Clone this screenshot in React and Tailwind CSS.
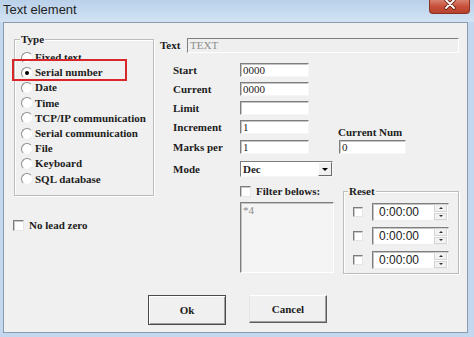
import React from 'react';

/* ── classic win32 bits ───────────────────────────────── */
const Radio = ({ checked }) => (
    <span className="w-[12px] h-[12px] shrink-0 rounded-full bg-white border border-t-[#8c8c8c] border-l-[#8c8c8c] border-r-[#ededed] border-b-[#ededed] flex items-center justify-center">
        {checked && <span className="w-[4px] h-[4px] rounded-full bg-black" />}
    </span>
);

const Check = ({ size = 'w-[11px] h-[11px]' }) => (
    <span className={`${size} shrink-0 bg-white border border-t-[#7c7c7c] border-l-[#7c7c7c] border-r-[#e6e6e6] border-b-[#e6e6e6] shadow-[inset_1px_1px_0_#c8c8c8]`} />
);

const Field = ({ value = '', className = '' }) => (
    <div className={`bg-white border border-t-[#7e7e7e] border-l-[#7e7e7e] border-r-[#f6f6f6] border-b-[#f6f6f6] shadow-[inset_1px_1px_0_#c4c4c4] flex items-center pl-[2px] text-[11px] text-[#222] font-normal ${className}`}>
        {value}
    </div>
);

const types = [
    'Fixed text', 'Serial number', 'Date', 'Time', 'TCP/IP communication',
    'Serial communication', 'File', 'Keyboard', 'SQL database',
];

const rows = [
    { label: 'Start', value: '0000', mt: 'mt-[10px]' },
    { label: 'Current', value: '0000', mt: 'mt-[5px]' },
    { label: 'Limit', value: '', mt: 'mt-[5px]' },
];

const TimeBox = () => (
    <div className="w-[77px] h-[18px] ml-[9px] bg-white border border-t-[#7e7e7e] border-l-[#7e7e7e] border-r-[#ececec] border-b-[#ececec] shadow-[inset_1px_1px_0_#c4c4c4] flex items-center">
        <span className="flex-1 pl-[6px] font-['Liberation_Sans',sans-serif] font-normal text-[12px] text-[#222] leading-none">0:00:00</span>
        <div className="w-[13px] h-[16px] flex flex-col gap-[1px] mr-[1px]">
            <div className="flex-1 bg-[#f2f2f2] border border-[#d4d4d4] flex items-center justify-center">
                <span className="w-0 h-0 border-l-[2px] border-r-[2px] border-b-[2px] border-l-transparent border-r-transparent border-b-[#333]" />
            </div>
            <div className="flex-1 bg-[#f2f2f2] border border-[#d4d4d4] flex items-center justify-center">
                <span className="w-0 h-0 border-l-[2px] border-r-[2px] border-t-[2px] border-l-transparent border-r-transparent border-t-[#333]" />
            </div>
        </div>
    </div>
);

export default function App() {
    return (
        <div className="w-[474px] h-[337px] flex flex-col bg-[#c3d8ee] font-['Liberation_Serif',serif] font-bold text-[11px] text-[#1c1c1c] overflow-hidden">
            {/* Title bar */}
            <div className="h-[22px] shrink-0 flex items-start justify-between bg-gradient-to-b from-[#b9d0e9] via-[#c6daef] to-[#d3e3f3]">
                <span className="pl-[3px] pt-[2px] font-['Liberation_Sans',sans-serif] font-normal text-[13px] text-[#1e1e1e] leading-[16px]">Text element</span>
                <div className="mr-[4px] w-[41px] h-[14px] rounded-b-[4px] border border-t-0 border-[#8a3325] bg-gradient-to-b from-[#d8816e] via-[#c7503a] to-[#b6422d] flex items-start justify-center">
                    <svg width="12" height="10" viewBox="0 0 12 10">
                        <path d="M2 0 L10 8 M10 0 L2 8" stroke="#5a1a10" strokeWidth="3.4" strokeLinecap="round" />
                        <path d="M2 0 L10 8 M10 0 L2 8" stroke="#ffffff" strokeWidth="1.8" strokeLinecap="round" />
                    </svg>
                </div>
            </div>

            {/* Client */}
            <div className="ml-[3px] mr-[6px] mb-[4px] flex-1 flex flex-col bg-[#f0f0f0] border border-[#8a9bb0]">
                <div className="h-[262px] pt-[15px] flex">
                    {/* left column */}
                    <div className="pl-[10px] flex flex-col">
                        <div className="relative mt-[1px] w-[140px] h-[157px] border border-[#bcbcbc] shadow-[inset_1px_1px_0_#ffffff,1px_1px_0_#ffffff] pt-[10px] pl-[6px]">
                            <span className="absolute -top-[7px] left-[5px] px-[1px] bg-[#f0f0f0] leading-[12px]">Type</span>
                            {types.map((t, i) => (
                                <div key={t} className="h-[15.2px] flex items-center gap-[2px]">
                                    <Radio checked={i === 1} />
                                    <span className="leading-none whitespace-nowrap">{t}</span>
                                </div>
                            ))}
                            {/* red annotation box */}
                            <div className="absolute left-[-3px] top-[19px] w-[115px] h-[22px] border-2 border-[#d8262a]" />
                        </div>
                        <div className="mt-[24px] -ml-[1px] flex items-center gap-[5px]">
                            <Check />
                            <span className="leading-none">No lead zero</span>
                        </div>
                    </div>

                    {/* right column */}
                    <div className="ml-[6px] flex flex-col">
                        <div className="h-[15px] flex items-center">
                            <span className="w-[27px]">Text</span>
                            <div className="w-[272px] h-[15px] bg-[#efefef] border border-t-[#7e7e7e] border-l-[#7e7e7e] border-r-[#ffffff] border-b-[#ffffff] flex items-center pl-[2px] font-normal text-[#8c8c8c]">TEXT</div>
                        </div>

                        {rows.map((r) => (
                            <div key={r.label} className={`${r.mt} h-[14px] flex items-center pl-[13px]`}>
                                <span className="w-[67px]">{r.label}</span>
                                <Field value={r.value} className="w-[69px] h-[14px]" />
                            </div>
                        ))}

                        <div className="mt-[5px] h-[14px] flex items-start pl-[13px]">
                            <span className="w-[67px] leading-[14px]">Increment</span>
                            <Field value="1" className="w-[69px] h-[14px]" />
                            <span className="ml-[29px] pt-[5px] leading-[14px] whitespace-nowrap">Current Num</span>
                        </div>

                        <div className="mt-[6px] h-[14px] flex items-center pl-[13px]">
                            <span className="w-[67px]">Marks per</span>
                            <Field value="1" className="w-[69px] h-[14px]" />
                            <Field value="0" className="ml-[30px] w-[67px] h-[14px]" />
                        </div>

                        <div className="mt-[7px] h-[16px] flex items-center pl-[13px]">
                            <span className="w-[67px]">Mode</span>
                            <div className="w-[93px] h-[16px] bg-white border border-t-[#7e7e7e] border-l-[#7e7e7e] border-r-[#f6f6f6] border-b-[#f6f6f6] flex items-center">
                                <span className="flex-1 pl-[2px]">Dec</span>
                                <div className="w-[14px] h-[14px] bg-[#f0f0f0] border border-t-[#ffffff] border-l-[#ffffff] border-r-[#6a6a6a] border-b-[#6a6a6a] flex items-center justify-center">
                                    <span className="w-0 h-0 border-l-[3px] border-r-[3px] border-t-[3px] border-l-transparent border-r-transparent border-t-black" />
                                </div>
                            </div>
                        </div>

                        <div className="mt-[9px] flex items-start">
                            <div className="w-[80px]" />
                            <div className="w-[94px] flex flex-col">
                                <div className="h-[11px] flex items-center gap-[5px]">
                                    <Check />
                                    <span className="leading-none whitespace-nowrap">Filter belows:</span>
                                </div>
                                <div className="mt-[5px] h-[71px] bg-[#f4f4f4] border border-t-[#7e7e7e] border-l-[#7e7e7e] border-r-[#ffffff] border-b-[#ffffff] shadow-[inset_1px_1px_0_#c4c4c4] pl-[2px] pt-[1px] font-normal text-[#8a8a8a] leading-[13px]">
                                    *4
                                </div>
                            </div>
                            <div className="relative ml-[9px] mt-[5px] w-[116px] h-[83px] border border-[#bcbcbc] shadow-[inset_1px_1px_0_#ffffff,1px_1px_0_#ffffff] pt-[11px] pl-[9px] flex flex-col gap-[6px]">
                                <span className="absolute -top-[7px] left-[4px] px-[1px] bg-[#f0f0f0] leading-[12px]">Reset</span>
                                {[0, 1, 2].map((i) => (
                                    <div key={i} className="h-[18px] flex items-center">
                                        <Check size="w-[10px] h-[10px]" />
                                        <TimeBox />
                                    </div>
                                ))}
                            </div>
                        </div>
                    </div>
                </div>

                {/* Buttons */}
                <div className="pt-[10px] pl-[144px] flex items-start">
                    <button className="w-[78px] h-[30px] bg-[#f0f0f0] border border-[#4a4a4a] shadow-[inset_1px_1px_0_#ffffff,inset_-1px_-1px_0_#a0a0a0]">
                        Ok
                    </button>
                    <button className="ml-[23px] w-[78px] h-[28px] bg-[#f0f0f0] border border-t-[#ffffff] border-l-[#e4e4e4] border-r-[#5c5c5c] border-b-[#5c5c5c] shadow-[inset_-1px_-1px_0_#a0a0a0]">
                        Cancel
                    </button>
                </div>
            </div>
        </div>
    );
}
